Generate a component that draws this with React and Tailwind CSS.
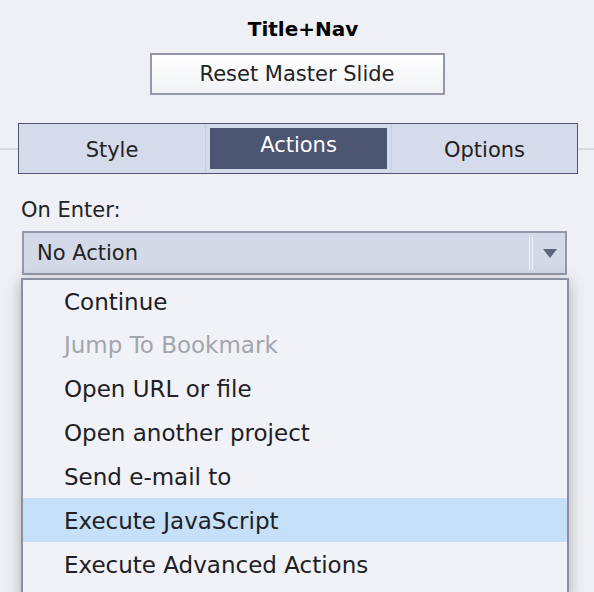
import React from "react";

const items = [
  { label: "Continue" },
  { label: "Jump To Bookmark", disabled: true },
  { label: "Open URL or file" },
  { label: "Open another project" },
  { label: "Send e-mail to" },
  { label: "Execute JavaScript", active: true },
  { label: "Execute Advanced Actions" },
];

export default function App() {
  return (
    <div className="h-[592px] w-full overflow-hidden bg-[#eef0f5] font-['DejaVu_Sans',sans-serif] text-[#202024]">
      <div className="pt-[17px] pl-[12px] text-center text-[20px] font-bold leading-[24px] text-black">
        Title+Nav
      </div>
      <div className="mt-[12px] flex justify-center">
        <button className="h-[42px] w-[295px] border-2 border-[#9298aa] bg-gradient-to-b from-white to-[#f1f2f6] pt-[1px] text-[21px] leading-none text-[#222]">
          Reset Master Slide
        </button>
      </div>

      <div className="mt-[28px] flex items-center">
        <div className="h-[2px] w-[18px] bg-[#d6d9df]" />
        <div className="grid h-[51px] w-[560px] grid-cols-3 border border-[#4d5474] bg-[#d5dbea]">
          <div className="flex items-center justify-center pt-[5px] text-[21px] text-[#222]">
            Style
          </div>
          <div className="border-l border-[#c9cfde] p-[4px]">
            <div className="flex h-full items-center justify-center bg-[#4c5572] pb-[6px] text-[21px] text-white">
              Actions
            </div>
          </div>
          <div className="flex items-center justify-center border-l border-[#c9cfde] pt-[5px] text-[21px] text-[#222]">
            Options
          </div>
        </div>
        <div className="h-[2px] flex-1 bg-[#d6d9df]" />
      </div>

      <div className="mt-[24px] pl-[21px] text-[21px] leading-[24px] text-[#222]">On Enter:</div>

      <div className="ml-[22px] mt-[9px] flex h-[44px] w-[545px] items-center border-2 border-[#9399ab] bg-[#d4d9e7]">
        <span className="pl-[13px] pt-[1px] text-[21px] leading-none text-[#222]">No Action</span>
        <div className="ml-auto h-[33px] w-[4px] border-x border-[#f0f2f7]" />
        <svg className="ml-[10px] mr-[8px]" width="14" height="9" viewBox="0 0 14 9">
          <path d="M0 0H14L7 9Z" fill="#5e657b" />
        </svg>
      </div>

      <div className="ml-[21px] mt-[3px] h-[320px] w-[548px] border-x-2 border-t-2 border-[#8b90a1] bg-[#f0f2f7] shadow-[0_3px_14px_rgba(0,0,0,0.28)]">
        {items.map((it, i) => (
          <div
            key={it.label}
            className={
              (i === 0 ? "h-[42px] " : "h-[44px] ") +
              "flex items-center pl-[41px] pt-[2px] text-[23px] leading-none " +
              (it.active ? "bg-[#c5e0f8] " : "") +
              (it.disabled ? "text-[#a3a5ac]" : "text-[#202024]")
            }
          >
            {it.label}
          </div>
        ))}
      </div>
    </div>
  );
}
